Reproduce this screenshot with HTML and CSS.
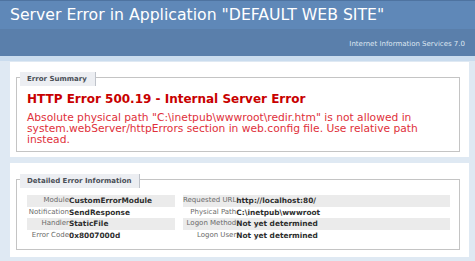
FILE: index.html
```html
<!DOCTYPE html>
<html lang="en">
<head>
    <meta charset="UTF-8">
    <title>IIS 7.0 Detailed Error - 500.19 - Internal Server Error</title>
    <link rel="stylesheet" href="styles.css">
</head>
<body>
    <div class="header">
        <h1>Server Error in Application "DEFAULT WEB SITE"</h1>
    </div>
    <div class="server">Internet Information Services 7.0</div>
    <div class="strip"></div>

    <div class="content">
        <!-- Resumo do erro -->
        <div class="panel summary">
            <div class="box">
                <div class="tab">Error Summary</div>
                <h2>HTTP Error 500.19 - Internal Server Error</h2>
                <p>Absolute physical path "C:\inetpub\wwwroot\redir.htm" is not allowed in system.webServer/httpErrors section in web.config file. Use relative path instead.</p>
            </div>
        </div>

        <!-- Detalhes -->
        <div class="panel details">
            <div class="box">
                <div class="tab">Detailed Error Information</div>
                <div class="tables">
                    <table class="left">
                        <tr class="alt"><th>Module</th><td>CustomErrorModule</td></tr>
                        <tr><th>Notification</th><td>SendResponse</td></tr>
                        <tr class="alt"><th>Handler</th><td>StaticFile</td></tr>
                        <tr><th>Error Code</th><td>0x8007000d</td></tr>
                    </table>
                    <table class="right">
                        <tr class="alt"><th>Requested URL</th><td>http://localhost:80/</td></tr>
                        <tr><th>Physical Path</th><td>C:\inetpub\wwwroot</td></tr>
                        <tr class="alt"><th>Logon Method</th><td>Not yet determined</td></tr>
                        <tr><th>Logon User</th><td>Not yet determined</td></tr>
                    </table>
                </div>
            </div>
        </div>
    </div>
</body>
</html>
```

FILE: styles.css
```css
body {
    margin: 0;
    background-color: #dfe9f3;
    font-family: "DejaVu Sans", Verdana, sans-serif;
}

.header {
    background-color: #5f88b8;
    height: 29px;
    border-top: 1px solid #4e73a0;
    box-sizing: border-box;
}

h1 {
    margin: 0;
    padding: 5px 0 0 10px;
    color: #ffffff;
    font-size: 15.7px;
    font-weight: normal;
    line-height: 18px;
}

.server {
    background-color: #5a7fab;
    height: 27px;
    box-sizing: border-box;
    padding: 11px 10px 0 0;
    text-align: right;
    color: #dde6f1;
    font-size: 7px;
}

.strip {
    height: 5px;
    background-color: #cadcee;
}

.content {
    padding: 1px 6px 0 10px;
}

.panel {
    background-color: #ffffff;
    margin-bottom: 6px;
    padding: 10px 9px 5px 6px;
}

.details {
    padding-top: 11px;
    padding-bottom: 7px;
}

.box {
    border: 1px solid #c4c4c4;
    margin-top: 5px;
    padding: 0 10px 6px 10px;
}

.details .box {
    padding-bottom: 5px;
}

.tab {
    width: max-content;
    margin: -6px 0 0 -7px;
    padding: 0 8px 0 7px;
    height: 14px;
    line-height: 14px;
    background-color: #eceef2;
    border-right: 1px solid #bfc3ca;
    color: #4a4f57;
    font-size: 7px;
    font-weight: bold;
}

h2 {
    margin: 5px 0 5px 0;
    color: #c80000;
    font-size: 12px;
    line-height: 16px;
}

p {
    margin: 0;
    color: #e0303a;
    font-size: 10.7px;
    line-height: 11px;
}

.tables {
    display: grid;
    grid-template-columns: 148px 267px;
    column-gap: 8px;
    margin-top: 7px;
    margin-bottom: 3px;
}

table {
    border-collapse: collapse;
    width: 100%;
}

tr {
    height: 11.5px;
}

tr.alt {
    background-color: #ebebeb;
}

th, td {
    padding: 0;
    font-size: 7px;
    line-height: 11px;
    white-space: nowrap;
}

th {
    font-weight: normal;
    color: #6a6a6a;
    text-align: right;
}

td {
    font-weight: bold;
    color: #2e2e2e;
    font-size: 7.4px;
}

.left th {
    width: 42px;
}

.right th {
    width: 50px;
}
```
